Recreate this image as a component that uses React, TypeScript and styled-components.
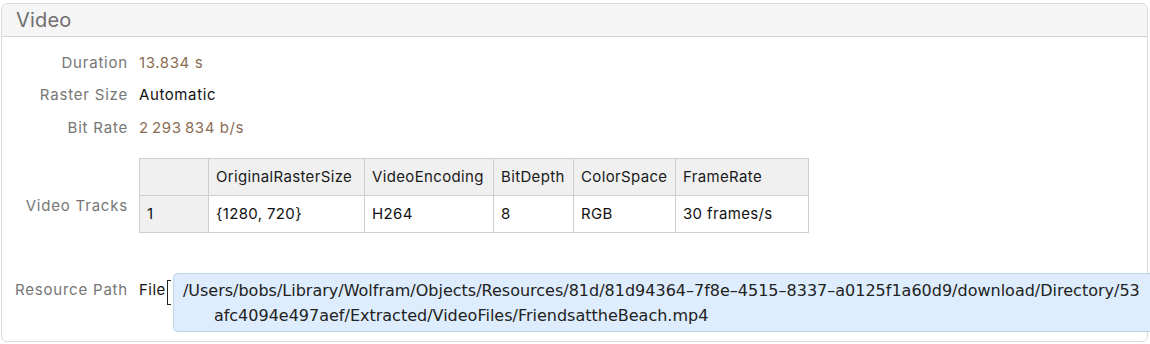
import styled, { createGlobalStyle } from "styled-components";

const GlobalStyle = createGlobalStyle`
  body {
    margin: 0;
    background: #ffffff;
    font-family: Inter, "Liberation Sans", sans-serif;
  }
`;

const Card = styled.section`
  box-sizing: border-box;
  width: 1147px;
  height: 339px;
  margin: 3px 0 0 1px;
  border: 1px solid #d9d9d9;
  border-radius: 6px;
  background: #fff;
`;

const CardHeader = styled.header`
  box-sizing: border-box;
  height: 33px;
  padding-left: 14px;
  display: flex;
  align-items: center;
  background: #f5f5f5;
  border-bottom: 1px solid #d4d4d4;
  border-radius: 6px 6px 0 0;
  font-size: 20px;
  letter-spacing: 0.2px;
  color: #6e6e6e;
`;

const Body = styled.div`
  padding-top: 10px;
  display: flex;
  flex-direction: column;
`;

const Row = styled.div<{ $height?: number; $top?: number }>`
  display: grid;
  grid-template-columns: 126px 1fr;
  column-gap: 11px;
  align-items: center;
  justify-items: start;
  height: ${(p) => (p.$height ? `${p.$height}px` : "auto")};
  margin-top: ${(p) => p.$top ?? 0}px;
  font-size: 15px;
  letter-spacing: 0.8px;
  line-height: 18px;
`;

const Label = styled.div<{ $pad?: number }>`
  justify-self: end;
  text-align: right;
  color: #767676;
  align-self: ${(p) => (p.$pad !== undefined ? "start" : "center")};
  padding-top: ${(p) => p.$pad ?? 0}px;
`;

const Value = styled.div<{ $tone?: "number" | "plain" }>`
  letter-spacing: 0.6px;
  color: ${(p) => (p.$tone === "number" ? "#8a6d53" : "#111")};
`;

const Table = styled.table`
  border-collapse: collapse;
  font-size: 15px;
  letter-spacing: 0.35px;
  color: #111;
  table-layout: fixed;
`;

const HeadCell = styled.td<{ $w: number }>`
  box-sizing: border-box;
  width: ${(p) => p.$w}px;
  height: 37px;
  padding: 0 7px;
  background: #f0f0f0;
  border: 1px solid #cfcfcf;
  color: #1a1a1a;
  white-space: nowrap;
`;

const Cell = styled.td`
  height: 36px;
  padding: 0 7px;
  background: #fff;
  border: 1px solid #cfcfcf;
  white-space: nowrap;
`;

const IndexCell = styled(Cell)`
  background: #f0f0f0;
`;

const PathRow = styled.div`
  display: flex;
  align-items: flex-start;
`;

const FileWord = styled.span`
  color: #111;
  letter-spacing: 0.5px;
  margin-top: 8px;
`;

const Bracket = styled.span`
  box-sizing: border-box;
  width: 4px;
  height: 25px;
  margin: 7px 2px 0 1px;
  border: 1px solid #222;
  border-left-width: 1.5px;
  border-right: none;
`;

const PathBox = styled.div`
  box-sizing: border-box;
  width: 985px;
  height: 59px;
  padding: 4px 0 4px 9px;
  background: #ddedfd;
  border: 1px solid #bcd3ea;
  border-right: none;
  border-radius: 5px 0 0 5px;
  font-family: "DejaVu Sans", Verdana, sans-serif;
  font-size: 16px;
  letter-spacing: 0;
  line-height: 25px;
  color: #222;
  white-space: nowrap;
`;

const PathLine = styled.div<{ $indent?: boolean }>`
  padding-left: ${(p) => (p.$indent ? 31 : 0)}px;
`;

const columns = [
  { name: "", w: 69 },
  { name: "OriginalRasterSize", w: 156 },
  { name: "VideoEncoding", w: 129 },
  { name: "BitDepth", w: 80 },
  { name: "ColorSpace", w: 102 },
  { name: "FrameRate", w: 133 },
];

const track = ["{1280, 720}", "H264", "8", "RGB", "30 frames/s"];

const pathLines = [
  "/Users/bobs/Library/Wolfram/Objects/Resources/81d/81d94364–7f8e–4515–8337–a0125f1a60d9/download/Directory/53",
  "afc4094e497aef/Extracted/VideoFiles/FriendsattheBeach.mp4",
];

export default function App() {
  return (
    <>
      <GlobalStyle />
      <Card>
        <CardHeader>Video</CardHeader>
        <Body>
          <Row $height={32}>
            <Label>Duration</Label>
            <Value $tone="number">13.834 s</Value>
          </Row>
          <Row $height={32}>
            <Label>Raster Size</Label>
            <Value>Automatic</Value>
          </Row>
          <Row $height={33}>
            <Label>Bit Rate</Label>
            <Value $tone="number">{"2\u2009293\u2009834 b/s"}</Value>
          </Row>
          <Row $top={14}>
            <Label $pad={39}>Video Tracks</Label>
            <Table>
              <tbody>
                <tr>
                  {columns.map((c, i) => (
                    <HeadCell key={i} $w={c.w}>
                      {c.name}
                    </HeadCell>
                  ))}
                </tr>
                <tr>
                  <IndexCell>1</IndexCell>
                  {track.map((v, i) => (
                    <Cell key={i}>{v}</Cell>
                  ))}
                </tr>
              </tbody>
            </Table>
          </Row>
          <Row $top={40}>
            <Label $pad={8}>Resource Path</Label>
            <PathRow>
              <FileWord>File</FileWord>
              <Bracket />
              <PathBox>
                {pathLines.map((l, i) => (
                  <PathLine key={i} $indent={i > 0}>
                    {l}
                  </PathLine>
                ))}
              </PathBox>
            </PathRow>
          </Row>
        </Body>
      </Card>
    </>
  );
}
